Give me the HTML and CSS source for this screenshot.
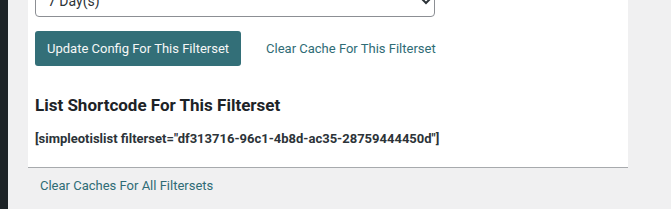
FILE: index.html
```html
<!doctype html>
<html>
<head>
  <meta charset="utf-8">
  <title>Filterset Settings</title>
  <link rel="stylesheet" href="styles.css">
</head>
<body>
  <div class="sidebar"></div>
  <div class="main">
    <div class="card">
      <select class="range">
        <option>7 Day(s)</option>
      </select>

      <div class="actions">
        <button class="button" type="button">Update Config For This Filterset</button>
        <a class="link" href="#">Clear Cache For This Filterset</a>
      </div>

      <h2>List Shortcode For This Filterset</h2>
      <p class="shortcode">[simpleotislist filterset="df313716-96c1-4b8d-ac35-28759444450d"]</p>
    </div>

    <a class="link all" href="#">Clear Caches For All Filtersets</a>
  </div>
</body>
</html>
```

FILE: styles.css
```css
body {
  margin: 0;
  background: #f0f0f1;
  font-family: Roboto, "Liberation Sans", sans-serif;
  color: #1d2327;
  display: flex;
  min-height: 209px;
  overflow: hidden;
}

.sidebar {
  width: 8px;
  background: #1d2327;
}

.main {
  padding-left: 20px;
  width: 600px;
}

.card {
  background: #fff;
  margin-top: -15px;
  padding: 0 7px 21px;
  border-bottom: 1px solid #a7aaad;
}

.range {
  display: block;
  width: 400px;
  height: 32px;
  padding: 0 8px;
  font-family: inherit;
  font-size: 14px;
  color: #2c3338;
  background: #fff;
  border: 1px solid #8c8f94;
  border-radius: 4px;
}

.actions {
  display: flex;
  align-items: center;
  gap: 25px;
  margin-top: 14px;
}

.button {
  height: 35px;
  padding: 0 12px;
  background: #336f78;
  color: #f6f7f7;
  border: none;
  border-radius: 3px;
  font-family: inherit;
  font-size: 13px;
}

.link {
  color: #2f6c76;
  text-decoration: none;
  font-size: 13px;
}

h2 {
  margin: 29px 0 0;
  font-size: 17px;
  font-weight: 700;
}

.shortcode {
  margin: 16px 0 0;
  font-size: 13px;
  font-weight: 700;
  color: #2c3338;
}

.all {
  display: inline-block;
  margin: 10px 0 0 12px;
}
```
